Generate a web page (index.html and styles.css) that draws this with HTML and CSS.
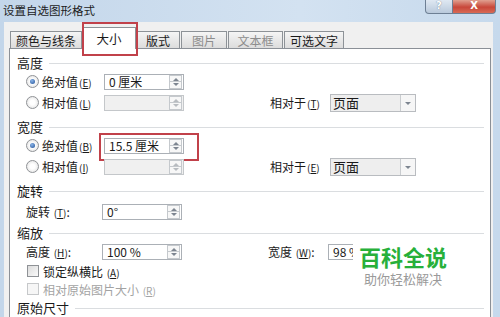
FILE: index.html
```html
<!DOCTYPE html>
<html lang="zh-CN">
<head>
  <meta charset="UTF-8">
  <title>设置自选图形格式</title>
  <link rel="stylesheet" href="styles.css">
</head>
<body>
  <div class="window">
    <div class="titlebar">
      <span class="title">设置自选图形格式</span>
      <div class="caption">
        <span class="cap-help">?</span>
        <span class="cap-close">X</span>
      </div>
    </div>

    <div class="dialog">
      <div class="tabs">
        <div class="tab t1">颜色与线条</div>
        <div class="tab active">大小<span class="mark tab-mark"></span></div>
        <div class="tab t3">版式</div>
        <div class="tab t4 off">图片</div>
        <div class="tab t5 off">文本框</div>
        <div class="tab t6">可选文字</div>
      </div>

      <div class="panel">
        <div class="sec">高度</div>
        <div class="row">
          <span class="radio on"></span>
          <span class="lbl">绝对值<span class="acc">(<u>E</u>)</span></span>
          <span class="field"><span class="val">0 厘米</span><span class="spin"></span></span>
        </div>
        <div class="row">
          <span class="radio"></span>
          <span class="lbl">相对值<span class="acc">(<u>L</u>)</span></span>
          <span class="field dis"><span class="val"></span><span class="spin"></span></span>
          <span class="rlbl">相对于<span class="acc">(<u>T</u>)</span></span>
          <span class="select"><span class="val">页面</span><span class="drop"></span></span>
        </div>

        <div class="sec">宽度</div>
        <div class="row">
          <span class="radio on"></span>
          <span class="lbl">绝对值<span class="acc">(<u>B</u>)</span></span>
          <span class="field"><span class="val">15.5 厘米</span><span class="spin"></span><span class="mark field-mark"></span></span>
        </div>
        <div class="row">
          <span class="radio"></span>
          <span class="lbl">相对值<span class="acc">(<u>I</u>)</span></span>
          <span class="field dis"><span class="val"></span><span class="spin"></span></span>
          <span class="rlbl">相对于<span class="acc">(<u>E</u>)</span></span>
          <span class="select"><span class="val">页面</span><span class="drop"></span></span>
        </div>

        <div class="sec">旋转</div>
        <div class="row rot">
          <span class="lbl wide">旋转 <span class="acc">(<u>T</u>)</span>:</span>
          <span class="field"><span class="val">0°</span><span class="spin"></span></span>
        </div>

        <div class="sec scale">缩放</div>
        <div class="row">
          <span class="lbl wide">高度 <span class="acc">(<u>H</u>)</span>:</span>
          <span class="field"><span class="val">100 %</span><span class="spin"></span></span>
          <span class="rlbl">宽度 <span class="acc">(<u>W</u>)</span>:</span>
          <span class="field"><span class="val">98 %</span><span class="spin"></span></span>
        </div>
        <div class="row chk">
          <span class="box"></span>
          <span class="lbl">锁定纵横比 <span class="acc">(<u>A</u>)</span></span>
        </div>
        <div class="row chk">
          <span class="box dis"></span>
          <span class="lbl off">相对原始图片大小 <span class="acc">(<u>R</u>)</span></span>
        </div>

        <div class="sec orig">原始尺寸</div>

        <div class="watermark">
          <div class="wm-big">百科全说</div>
          <div class="wm-small">助你轻松解决</div>
        </div>
      </div>
    </div>
  </div>
</body>
</html>
```

FILE: styles.css
```css
body {
  margin: 0;
  width: 500px;
  height: 317px;
  overflow: hidden;
  font-family: "Noto Sans CJK SC", "DejaVu Sans", sans-serif;
  font-size: 12px;
  color: #1a1a1a;
}

.window {
  height: 317px;
  background: linear-gradient(to right, #c3d6ea, #d3e2f1 60%, #c6d9ec);
  display: flex;
  flex-direction: column;
}

.titlebar {
  height: 22px;
  position: relative;
  padding-left: 3px;
  line-height: 20px;
  flex: none;
}

.title {
  font-size: 11.5px;
  color: #1c1c1c;
}

.caption {
  position: absolute;
  right: 4px;
  top: 0;
  display: flex;
}

.caption span {
  height: 13px;
  line-height: 12px;
  text-align: center;
  color: #fff;
  font-family: "DejaVu Sans", sans-serif;
  font-weight: bold;
  font-size: 10px;
  border: 1px solid #6d7f94;
  border-top: none;
}

.cap-help {
  width: 26px;
  background: linear-gradient(#dfe8f2, #b9c9db);
  border-radius: 0 0 0 4px;
  color: #f6f8fb;
  text-shadow: 0 0 1px #55657a;
}

.cap-close {
  width: 42px;
  background: linear-gradient(#e0a090, #c8473a 55%, #d86a55);
  border-left: none !important;
  border-radius: 0 0 4px 0;
}

.dialog {
  flex: 1;
  margin: 0 7px 0 4px;
  padding: 5px 2px 0 5px;
  background: #f0f0f0;
  display: flex;
  flex-direction: column;
}

.tabs {
  display: flex;
  align-items: flex-end;
  height: 21px;
  padding-left: 1px;
  position: relative;
  z-index: 2;
}

.tab {
  height: 17px;
  line-height: 17px;
  border: 1px solid #8d9297;
  border-bottom: none;
  background: linear-gradient(#f5f5f5, #dcdcdc);
  text-align: center;
  font-size: 12px;
  margin-left: 1px;
  box-sizing: border-box;
}

.t1 { width: 72px; margin-left: 0; }
.t3 { width: 44px; margin-left: 0; }
.t4 { width: 46px; }
.t5 { width: 55px; }
.t6 { width: 60px; }

.tab.off { color: #8d8d8d; }

.tab.active {
  position: relative;
  width: 54px;
  height: 22px;
  line-height: 22px;
  margin: 0 0 -1px 0;
  background: #fff;
  font-size: 12.5px;
}

.mark {
  position: absolute;
  border: 2px solid #c1414a;
  box-sizing: border-box;
}

.tab-mark {
  left: -1px;
  top: -6px;
  width: 56px;
  height: 34px;
}

.panel {
  flex: 1;
  position: relative;
  background: #fff;
  border: 1px solid #8b9097;
  border-bottom: none;
  padding-top: 6px;
  display: flex;
  flex-direction: column;
}

.sec {
  height: 16px;
  line-height: 16px;
  display: flex;
  align-items: center;
  padding-left: 7px;
  margin-top: 6px;
  font-size: 13px;
}

.sec:first-child { margin-top: 0; }
.sec.scale { margin-top: 3px; }
.sec.orig { margin-top: 2px; }

.sec::after {
  content: "";
  flex: 1;
  border-top: 1px solid #dadde0;
  margin: 1px 6px 0 6px;
}

.row {
  height: 21px;
  display: flex;
  align-items: center;
  padding-left: 16px;
}

.row.rot { margin-top: 2px; }
.row.chk { height: 18px; }

.radio {
  width: 11px;
  height: 11px;
  border-radius: 50%;
  border: 1px solid #8f9296;
  background: radial-gradient(circle, #fff 30%, #dcdcdc 100%);
  position: relative;
  flex: none;
}

.radio.on::after {
  content: "";
  position: absolute;
  left: 3px;
  top: 3px;
  width: 5px;
  height: 5px;
  border-radius: 50%;
  background: radial-gradient(circle at 40% 35%, #8ab4e8, #1f4f95);
}

.box {
  width: 10px;
  height: 10px;
  border: 1px solid #8f9296;
  background: linear-gradient(135deg, #dcdcdc, #fafafa);
  flex: none;
  margin-left: 1px;
}

.box.dis {
  border-color: #c6c8ca;
  background: #f6f6f6;
}

.lbl {
  width: 62px;
  margin-left: 3px;
  white-space: nowrap;
}

.lbl.wide {
  width: 76px;
  margin-left: 0;
}

.chk .lbl { margin-left: 4px; }
.lbl.off { color: #a3a3a3; }

.acc {
  font-size: 10px;
  margin-left: 1px;
}

.field {
  position: relative;
  width: 80px;
  height: 16px;
  box-sizing: border-box;
  border: 1px solid #abb0b6;
  background: #fff;
  display: flex;
  align-items: center;
  flex: none;
}

.field.dis {
  background: #f0f0f0;
  border-color: #c4c7ca;
}

.val {
  flex: 1;
  padding-left: 4px;
  font-size: 12px;
  line-height: 14px;
  white-space: nowrap;
}

.spin {
  width: 13px;
  height: 14px;
  box-sizing: border-box;
  border: 1px solid #c5c9cd;
  margin-right: 1px;
  background:
    linear-gradient(#c5c9cd, #c5c9cd) center / 100% 1px no-repeat,
    #f7f7f7;
  position: relative;
  flex: none;
}

.spin::before,
.spin::after {
  content: "";
  position: absolute;
  left: 3px;
  border-left: 3px solid transparent;
  border-right: 3px solid transparent;
}

.spin::before {
  top: 2px;
  border-bottom: 3px solid #7d8590;
}

.spin::after {
  bottom: 2px;
  border-top: 3px solid #7d8590;
}

.dis .spin::before { border-bottom-color: #b8bcc0; }
.dis .spin::after { border-top-color: #b8bcc0; }

.field-mark {
  left: -6px;
  top: -6px;
  width: 100px;
  height: 28px;
}

.rlbl {
  width: 60px;
  margin-left: 86px;
  white-space: nowrap;
}

.select {
  width: 86px;
  height: 18px;
  box-sizing: border-box;
  border: 1px solid #b9bcc0;
  background: #eeeeee;
  display: flex;
  align-items: center;
  flex: none;
}

.select .val {
  padding-left: 2px;
  font-size: 13px;
  line-height: 16px;
}

.drop {
  width: 15px;
  height: 16px;
  box-sizing: border-box;
  border-left: 1px solid #c9cccf;
  background: #f6f6f6;
  position: relative;
  flex: none;
}

.drop::after {
  content: "";
  position: absolute;
  left: 4px;
  top: 7px;
  border-left: 3px solid transparent;
  border-right: 3px solid transparent;
  border-top: 3px solid #7d8590;
}

.watermark {
  position: absolute;
  left: 343px;
  top: 190px;
  width: 108px;
  height: 56px;
  background: #fff;
  padding-left: 6px;
  box-sizing: border-box;
}

.wm-big {
  font-size: 22px;
  font-weight: bold;
  color: #27b03a;
  line-height: 26px;
  margin-top: 4px;
}

.wm-small {
  font-size: 13px;
  color: #9a9a9a;
  line-height: 18px;
  padding-left: 5px;
  margin-top: 1px;
}
```
